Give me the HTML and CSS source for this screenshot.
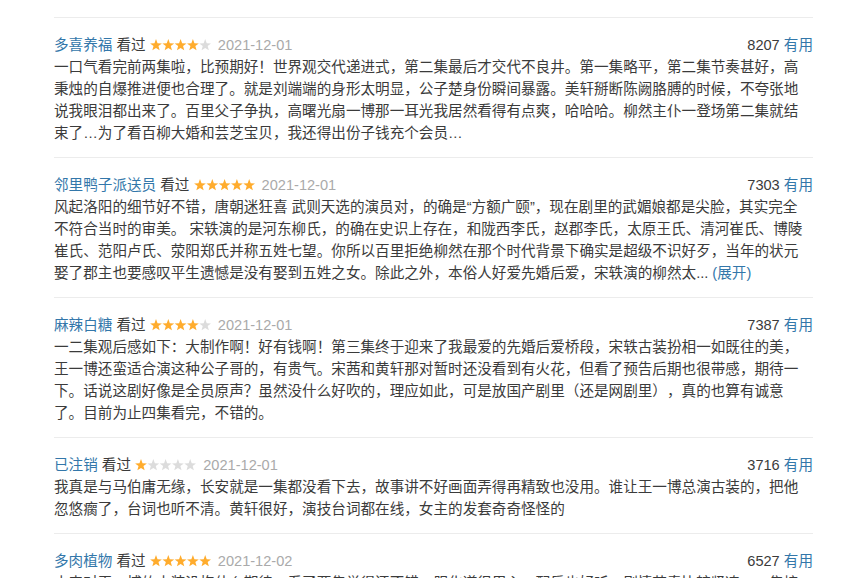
FILE: index.html
```html
<!DOCTYPE html>
<html lang="zh-CN">
<head>
<meta charset="utf-8">
<title>短评</title>
<link rel="stylesheet" href="styles.css">
</head>
<body>
<div class="comments">

  <div class="item">
    <div class="head">
      <span class="info"><a class="name">多喜养福</a> <span class="watched">看过</span> <svg class="stars" width="61" height="12" viewBox="0 0 61 12"><polygon class="on" transform="translate(0 0)" points="6,0.1 7.53,4.2 11.9,4.38 8.47,7.1 9.64,11.32 6,8.9 2.36,11.32 3.53,7.1 0.1,4.38 4.47,4.2"/><polygon class="on" transform="translate(12.3 0)" points="6,0.1 7.53,4.2 11.9,4.38 8.47,7.1 9.64,11.32 6,8.9 2.36,11.32 3.53,7.1 0.1,4.38 4.47,4.2"/><polygon class="on" transform="translate(24.6 0)" points="6,0.1 7.53,4.2 11.9,4.38 8.47,7.1 9.64,11.32 6,8.9 2.36,11.32 3.53,7.1 0.1,4.38 4.47,4.2"/><polygon class="on" transform="translate(36.9 0)" points="6,0.1 7.53,4.2 11.9,4.38 8.47,7.1 9.64,11.32 6,8.9 2.36,11.32 3.53,7.1 0.1,4.38 4.47,4.2"/><polygon class="off" transform="translate(49.2 0)" points="6,0.1 7.53,4.2 11.9,4.38 8.47,7.1 9.64,11.32 6,8.9 2.36,11.32 3.53,7.1 0.1,4.38 4.47,4.2"/></svg> <span class="date">2021-12-01</span></span>
      <span class="votes"><span class="count">8207</span> <a class="useful">有用</a></span>
    </div>
    <p class="text">一口气看完前两集啦，比预期好！世界观交代递进式，第二集最后才交代不良井。第一集略平，第二集节奏甚好，高秉烛的自爆推进便也合理了。就是刘端端的身形太明显，公子楚身份瞬间暴露。美轩掰断陈阙胳膊的时候，不夸张地说我眼泪都出来了。百里父子争执，高曙光扇一博那一耳光我居然看得有点爽，哈哈哈。柳然主仆一登场第二集就结束了…为了看百柳大婚和芸芝宝贝，我还得出份子钱充个会员…</p>
  </div>

  <div class="item">
    <div class="head">
      <span class="info"><a class="name">邻里鸭子派送员</a> <span class="watched">看过</span> <svg class="stars" width="61" height="12" viewBox="0 0 61 12"><polygon class="on" transform="translate(0 0)" points="6,0.1 7.53,4.2 11.9,4.38 8.47,7.1 9.64,11.32 6,8.9 2.36,11.32 3.53,7.1 0.1,4.38 4.47,4.2"/><polygon class="on" transform="translate(12.3 0)" points="6,0.1 7.53,4.2 11.9,4.38 8.47,7.1 9.64,11.32 6,8.9 2.36,11.32 3.53,7.1 0.1,4.38 4.47,4.2"/><polygon class="on" transform="translate(24.6 0)" points="6,0.1 7.53,4.2 11.9,4.38 8.47,7.1 9.64,11.32 6,8.9 2.36,11.32 3.53,7.1 0.1,4.38 4.47,4.2"/><polygon class="on" transform="translate(36.9 0)" points="6,0.1 7.53,4.2 11.9,4.38 8.47,7.1 9.64,11.32 6,8.9 2.36,11.32 3.53,7.1 0.1,4.38 4.47,4.2"/><polygon class="on" transform="translate(49.2 0)" points="6,0.1 7.53,4.2 11.9,4.38 8.47,7.1 9.64,11.32 6,8.9 2.36,11.32 3.53,7.1 0.1,4.38 4.47,4.2"/></svg> <span class="date">2021-12-01</span></span>
      <span class="votes"><span class="count">7303</span> <a class="useful">有用</a></span>
    </div>
    <p class="text">风起洛阳的细节好不错，唐朝迷狂喜 武则天选的演员对，的确是“方额广颐”，现在剧里的武媚娘都是尖脸，其实完全不符合当时的审美。 宋轶演的是河东柳氏，的确在史识上存在，和陇西李氏，赵郡李氏，太原王氏、清河崔氏、博陵崔氏、范阳卢氏、荥阳郑氏并称五姓七望。你所以百里拒绝柳然在那个时代背景下确实是超级不识好歹，当年的状元娶了郡主也要感叹平生遗憾是没有娶到五姓之女。除此之外，本俗人好爱先婚后爱，宋轶演的柳然太... <a class="unfold">(展开)</a></p>
  </div>

  <div class="item">
    <div class="head">
      <span class="info"><a class="name">麻辣白糖</a> <span class="watched">看过</span> <svg class="stars" width="61" height="12" viewBox="0 0 61 12"><polygon class="on" transform="translate(0 0)" points="6,0.1 7.53,4.2 11.9,4.38 8.47,7.1 9.64,11.32 6,8.9 2.36,11.32 3.53,7.1 0.1,4.38 4.47,4.2"/><polygon class="on" transform="translate(12.3 0)" points="6,0.1 7.53,4.2 11.9,4.38 8.47,7.1 9.64,11.32 6,8.9 2.36,11.32 3.53,7.1 0.1,4.38 4.47,4.2"/><polygon class="on" transform="translate(24.6 0)" points="6,0.1 7.53,4.2 11.9,4.38 8.47,7.1 9.64,11.32 6,8.9 2.36,11.32 3.53,7.1 0.1,4.38 4.47,4.2"/><polygon class="on" transform="translate(36.9 0)" points="6,0.1 7.53,4.2 11.9,4.38 8.47,7.1 9.64,11.32 6,8.9 2.36,11.32 3.53,7.1 0.1,4.38 4.47,4.2"/><polygon class="off" transform="translate(49.2 0)" points="6,0.1 7.53,4.2 11.9,4.38 8.47,7.1 9.64,11.32 6,8.9 2.36,11.32 3.53,7.1 0.1,4.38 4.47,4.2"/></svg> <span class="date">2021-12-01</span></span>
      <span class="votes"><span class="count">7387</span> <a class="useful">有用</a></span>
    </div>
    <p class="text">一二集观后感如下：大制作啊！好有钱啊！第三集终于迎来了我最爱的先婚后爱桥段，宋轶古装扮相一如既往的美，王一博还蛮适合演这种公子哥的，有贵气。宋茜和黄轩那对暂时还没看到有火花，但看了预告后期也很带感，期待一下。话说这剧好像是全员原声？虽然没什么好吹的，理应如此，可是放国产剧里（还是网剧里），真的也算有诚意了。目前为止四集看完，不错的。</p>
  </div>

  <div class="item">
    <div class="head">
      <span class="info"><a class="name">已注销</a> <span class="watched">看过</span> <svg class="stars" width="61" height="12" viewBox="0 0 61 12"><polygon class="on" transform="translate(0 0)" points="6,0.1 7.53,4.2 11.9,4.38 8.47,7.1 9.64,11.32 6,8.9 2.36,11.32 3.53,7.1 0.1,4.38 4.47,4.2"/><polygon class="off" transform="translate(12.3 0)" points="6,0.1 7.53,4.2 11.9,4.38 8.47,7.1 9.64,11.32 6,8.9 2.36,11.32 3.53,7.1 0.1,4.38 4.47,4.2"/><polygon class="off" transform="translate(24.6 0)" points="6,0.1 7.53,4.2 11.9,4.38 8.47,7.1 9.64,11.32 6,8.9 2.36,11.32 3.53,7.1 0.1,4.38 4.47,4.2"/><polygon class="off" transform="translate(36.9 0)" points="6,0.1 7.53,4.2 11.9,4.38 8.47,7.1 9.64,11.32 6,8.9 2.36,11.32 3.53,7.1 0.1,4.38 4.47,4.2"/><polygon class="off" transform="translate(49.2 0)" points="6,0.1 7.53,4.2 11.9,4.38 8.47,7.1 9.64,11.32 6,8.9 2.36,11.32 3.53,7.1 0.1,4.38 4.47,4.2"/></svg> <span class="date">2021-12-01</span></span>
      <span class="votes"><span class="count">3716</span> <a class="useful">有用</a></span>
    </div>
    <p class="text">我真是与马伯庸无缘，长安就是一集都没看下去，故事讲不好画面弄得再精致也没用。谁让王一博总演古装的，把他忽悠瘸了，台词也听不清。黄轩很好，演技台词都在线，女主的发套奇奇怪怪的</p>
  </div>

  <div class="item">
    <div class="head">
      <span class="info"><a class="name">多肉植物</a> <span class="watched">看过</span> <svg class="stars" width="61" height="12" viewBox="0 0 61 12"><polygon class="on" transform="translate(0 0)" points="6,0.1 7.53,4.2 11.9,4.38 8.47,7.1 9.64,11.32 6,8.9 2.36,11.32 3.53,7.1 0.1,4.38 4.47,4.2"/><polygon class="on" transform="translate(12.3 0)" points="6,0.1 7.53,4.2 11.9,4.38 8.47,7.1 9.64,11.32 6,8.9 2.36,11.32 3.53,7.1 0.1,4.38 4.47,4.2"/><polygon class="on" transform="translate(24.6 0)" points="6,0.1 7.53,4.2 11.9,4.38 8.47,7.1 9.64,11.32 6,8.9 2.36,11.32 3.53,7.1 0.1,4.38 4.47,4.2"/><polygon class="on" transform="translate(36.9 0)" points="6,0.1 7.53,4.2 11.9,4.38 8.47,7.1 9.64,11.32 6,8.9 2.36,11.32 3.53,7.1 0.1,4.38 4.47,4.2"/><polygon class="on" transform="translate(49.2 0)" points="6,0.1 7.53,4.2 11.9,4.38 8.47,7.1 9.64,11.32 6,8.9 2.36,11.32 3.53,7.1 0.1,4.38 4.47,4.2"/></svg> <span class="date">2021-12-02</span></span>
      <span class="votes"><span class="count">6527</span> <a class="useful">有用</a></span>
    </div>
    <p class="text">本来对王一博的古装没抱什么期待，看了两集觉得还不错，服化道很用心，配乐也好听，剧情节奏比较紧凑，一集接一集停不下来，期待后面的发展。</p>
  </div>

</div>
</body>
</html>
```

FILE: styles.css
```css
html, body {
  margin: 0;
  padding: 0;
  background: #ffffff;
}

body {
  font-family: "Liberation Sans", "Noto Sans CJK SC", sans-serif;
  font-size: 14.6px;
  line-height: 22px;
  color: #3b3b3b;
  text-spacing-trim: space-all;
}

.comments {
  width: 759px;
  margin-left: 54px;
  padding-top: 17px;
}

.item {
  border-top: 1px solid #ececec;
  padding: 16px 0 13px;
}

.head {
  display: flex;
  justify-content: space-between;
  align-items: baseline;
  height: 22px;
  white-space: nowrap;
}

.name {
  color: #3377aa;
  text-decoration: none;
}

.watched {
  color: #3b3b3b;
}

.stars {
  vertical-align: -1px;
  margin-right: 3px;
}

.stars .on {
  fill: #ffac2d;
}

.stars .off {
  fill: #dcdcdc;
}

.date {
  color: #aaaaaa;
}

.count {
  color: #3b3b3b;
}

.useful {
  color: #3377aa;
  text-decoration: none;
}

.text {
  margin: 0;
  padding-right: 5px;
  color: #3b3b3b;
}

.unfold {
  color: #3377aa;
  text-decoration: none;
}
```
